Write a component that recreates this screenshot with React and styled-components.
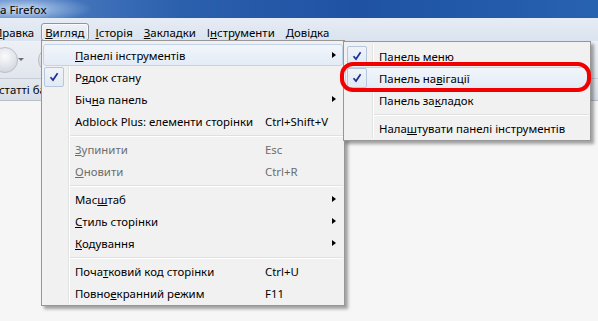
import React from 'react';
import styled, { createGlobalStyle, css } from 'styled-components';

const GlobalStyle = createGlobalStyle`
  html, body {
    margin: 0;
    padding: 0;
    background: #f4f4f4;
  }
  body {
    font-family: "Noto Sans", "Open Sans", sans-serif;
    font-size: 11.4px;
    color: #000;
  }
`;

const Window = styled.div`
  position: relative;
  width: 598px;
  height: 321px;
  overflow: hidden;
  background: #f5f5f5;
  display: flex;
  flex-direction: column;
`;

const TitleBar = styled.div`
  height: 18px;
  flex: 0 0 auto;
  display: flex;
  align-items: center;
  font-size: 11.6px;
  color: #000;
  background:
    radial-gradient(ellipse 70px 14px at 22px 9px, rgba(220, 235, 255, 0.75), rgba(220, 235, 255, 0) 100%),
    linear-gradient(to right, #5584c6 0%, #2b60ad 30%, #1f52a3 60%, #2762b0 100%);
  text-shadow: 0 0 6px rgba(255, 255, 255, 0.8);
`;

const MenuBar = styled.div`
  height: 23px;
  flex: 0 0 auto;
  display: flex;
  align-items: flex-start;
  padding-top: 5px;
  box-sizing: border-box;
  background: linear-gradient(#e6ecf5, #dae3ef);
`;

const MenuBarItem = styled.div`
  height: 18px;
  box-sizing: border-box;
  display: flex;
  align-items: center;
  padding: 0 3px;
  margin-right: 3px;
  border: 1px solid transparent;
  border-radius: 3px;
  white-space: nowrap;
  ${(p) => p.$first && css`margin-left: -10px;`}
  ${(p) => p.$open && css`
    border-color: #8e959f;
    background: linear-gradient(#eef2f7, #dde4ed);
    box-shadow: inset 0 0 0 1px rgba(255, 255, 255, 0.6);
  `}
`;

const Toolbar = styled.div`
  height: 37px;
  flex: 0 0 auto;
  display: flex;
  align-items: center;
  gap: 4px;
  background: linear-gradient(#edf1f6, #e1e6ed);
  border-bottom: 1px solid #c7ced8;
`;

const RoundButton = styled.div`
  width: 26px;
  height: 26px;
  flex: 0 0 auto;
  border-radius: 50%;
  margin-left: ${(p) => p.$offset || 0}px;
  border: 1px solid #b9bfc7;
  background: radial-gradient(circle at 50% 35%, #fafbfc, #d8dce2 70%, #c8cdd4);
  box-sizing: border-box;
`;

const DropArrow = styled.div`
  width: 0;
  height: 0;
  border-left: 3px solid transparent;
  border-right: 3px solid transparent;
  border-top: 3px solid #6a6f76;
  margin-left: -4px;
`;

const BookmarkBar = styled.div`
  height: 21px;
  flex: 0 0 auto;
  display: flex;
  align-items: center;
  background: linear-gradient(#e3e8ee, #d8dee6);
  border-bottom: 1px solid #b9c0ca;
`;

const Bookmark = styled.span`
  margin-left: -1px;
  white-space: nowrap;
`;

const Content = styled.div`
  flex: 1 1 auto;
  background: #f6f6f6;
`;

const MenuPanel = styled.div`
  position: absolute;
  left: ${(p) => p.$left}px;
  top: ${(p) => p.$top}px;
  width: ${(p) => p.$width}px;
  box-sizing: border-box;
  padding: 3px 1px 1px 1px;
  background: #f1f1f1;
  border: 1px solid #979797;
  box-shadow: 3px 3px 3px rgba(0, 0, 0, 0.35);
  z-index: ${(p) => p.$z || 1};

  &::before {
    content: '';
    position: absolute;
    top: 2px;
    bottom: 2px;
    left: ${(p) => p.$icon - 5}px;
    width: 1px;
    background: #e2e3e3;
    box-shadow: 1px 0 0 #ffffff;
  }
`;

const Row = styled.div`
  position: relative;
  height: 22px;
  box-sizing: border-box;
  display: grid;
  grid-template-columns: ${(p) => p.$icon}px ${(p) => p.$label}px 1fr;
  align-items: center;
  border: 1px solid transparent;
  border-radius: 3px;
  color: ${(p) => (p.$disabled ? '#6d6d6d' : '#000')};
  white-space: nowrap;
  ${(p) => p.$hot && css`
    border-color: #c3d4ea;
    background: linear-gradient(#f2f6fb, #e3ebf6);
  `}
`;

const IconCell = styled.div`
  height: 20px;
  display: flex;
  align-items: center;
  padding-left: ${(p) => p.$pad || 0}px;
`;

const CheckBox = styled.div`
  width: 20px;
  height: 20px;
  box-sizing: border-box;
  border: 1px solid #b6c6dc;
  border-radius: 2px;
  background: linear-gradient(#f0f4f9, #e2e9f3);
  display: flex;
  align-items: center;
  justify-content: center;
`;

const Shortcut = styled.span``;

const SubArrow = styled.div`
  position: absolute;
  right: 6px;
  top: 7px;
  width: 0;
  height: 0;
  border-top: 3.5px solid transparent;
  border-bottom: 3.5px solid transparent;
  border-left: 4px solid #000;
`;

const Separator = styled.div`
  height: 6px;
  display: flex;
  align-items: center;
  padding-left: ${(p) => p.$icon - 4}px;

  &::after {
    content: '';
    flex: 1;
    height: 1px;
    background: #e0e0e0;
    box-shadow: 0 1px 0 #ffffff;
  }
`;

const RedRing = styled.div`
  position: absolute;
  left: 340px;
  top: 62px;
  width: 251px;
  height: 30px;
  box-sizing: border-box;
  border: 4px solid #f20000;
  border-radius: 13px;
  z-index: 5;
`;

const Check = () => (
  <svg width="10" height="10" viewBox="0 0 10 10">
    <path d="M1.5 5.2 L4 8 L8.6 1.2" fill="none" stroke="#1c2f99" strokeWidth="1.7" />
  </svg>
);

const mainItems = [
  { label: <><u>П</u>анелі інструментів</>, hot: true, sub: true },
  { label: <>Р<u>я</u>док стану</>, checked: true },
  { label: <>Біч<u>н</u>а панель</>, sub: true },
  { label: 'Adblock Plus: елементи сторінки', key: 'Ctrl+Shift+V' },
  'sep',
  { label: <><u>З</u>упинити</>, key: 'Esc', disabled: true },
  { label: <><u>О</u>новити</>, key: 'Ctrl+R', disabled: true },
  'sep',
  { label: <>Мас<u>ш</u>таб</>, sub: true },
  { label: <><u>С</u>тиль сторінки</>, sub: true },
  { label: <><u>К</u>одування</>, sub: true },
  'sep',
  { label: <>Поча<u>т</u>ковий код сторінки</>, key: 'Ctrl+U' },
  { label: <>Повно<u>е</u>кранний режим</>, key: 'F11' },
];

const subItems = [
  { label: <>Панель <u>м</u>еню</>, checked: true },
  { label: <>Панель на<u>в</u>ігації</>, checked: true, hot: true },
  { label: <>Панель за<u>к</u>ладок</> },
  'sep',
  { label: <>Нала<u>ш</u>тувати панелі інструментів</> },
];

const Menu = ({ items, left, top, width, icon, label, pad, z }) => (
  <MenuPanel $left={left} $top={top} $width={width} $icon={icon} $z={z}>
    {items.map((it, i) => (it === 'sep' ? (
      <Separator key={i} $icon={icon} />
    ) : (
      <Row key={i} $icon={icon} $label={label} $hot={it.hot} $disabled={it.disabled}>
        <IconCell $pad={pad}>{it.checked && <CheckBox><Check /></CheckBox>}</IconCell>
        <span>{it.label}</span>
        {it.key && <Shortcut>{it.key}</Shortcut>}
        {it.sub && <SubArrow />}
      </Row>
    )))}
  </MenuPanel>
);

export default function App() {
  return (
    <>
      <GlobalStyle />
      <Window>
        <TitleBar>a Firefox</TitleBar>
        <MenuBar>
          <MenuBarItem $first><u>П</u>равка</MenuBarItem>
          <MenuBarItem $open><u>В</u>игляд</MenuBarItem>
          <MenuBarItem><u>І</u>сторія</MenuBarItem>
          <MenuBarItem><u>З</u>акладки</MenuBarItem>
          <MenuBarItem>І<u>н</u>струменти</MenuBarItem>
          <MenuBarItem><u>Д</u>овідка</MenuBarItem>
        </MenuBar>
        <Toolbar>
          <RoundButton $offset={-8} />
          <DropArrow />
          <RoundButton $offset={10} />
        </Toolbar>
        <BookmarkBar>
          <Bookmark>статті базы</Bookmark>
        </BookmarkBar>
        <Content />
        <Menu items={mainItems} left={41} top={40} width={304} icon={31} label={190} pad={0} z={2} />
        <Menu items={subItems} left={343} top={41} width={248} icon={33} label={180} pad={1} z={3} />
        <RedRing />
      </Window>
    </>
  );
}
